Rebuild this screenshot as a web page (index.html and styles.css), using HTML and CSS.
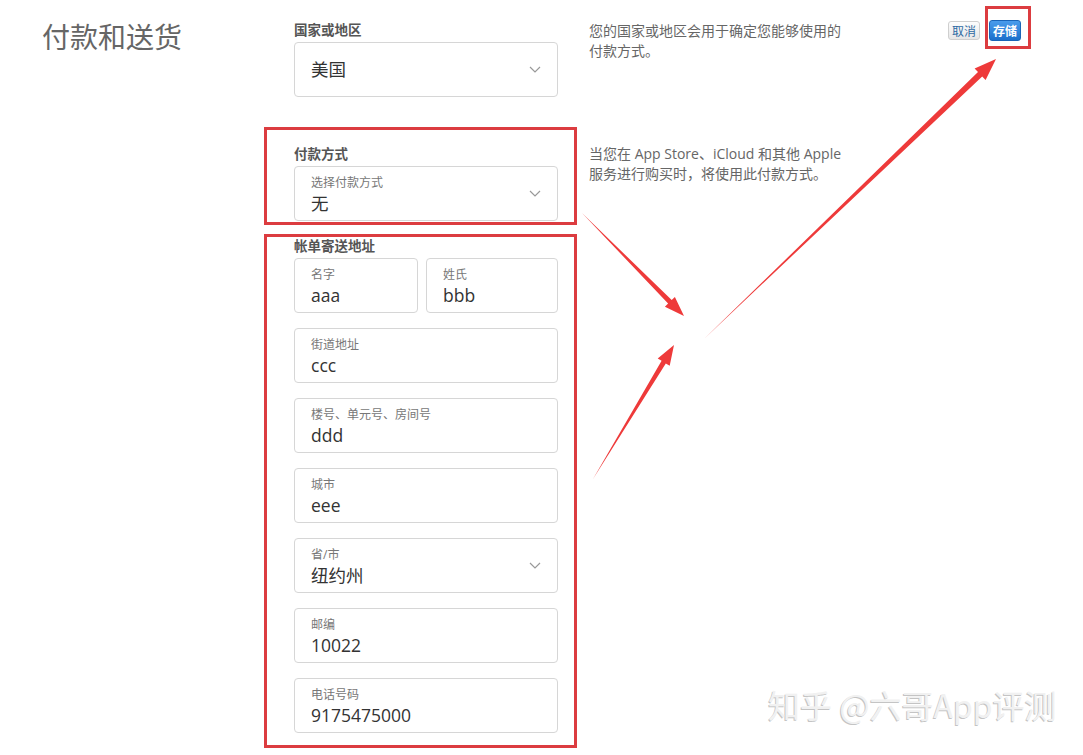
FILE: index.html
```html
<!DOCTYPE html>
<html lang="zh-CN">
<head>
    <meta charset="UTF-8">
    <meta name="viewport" content="width=device-width, initial-scale=1.0">
    <title>付款和送货</title>
    <link rel="stylesheet" href="styles.css">
</head>
<body>
    <main class="page">
        <h1 class="title">付款和送货</h1>

        <section class="country">
            <div class="group-label">国家或地区</div>
            <div class="field select single">
                <span class="value">美国</span>
                <svg class="chevron" width="12" height="7" viewBox="0 0 12 7"><polyline points="1,1 6,6 11,1" /></svg>
            </div>
        </section>

        <p class="help help-country">您的国家或地区会用于确定您能够使用的<br>付款方式。</p>

        <div class="actions">
            <button class="btn btn-cancel">取消</button>
            <button class="btn btn-save">存储</button>
        </div>

        <section class="payment marked">
            <div class="group-label">付款方式</div>
            <div class="field select">
                <div>
                    <div class="field-label">选择付款方式</div>
                    <div class="value">无</div>
                </div>
                <svg class="chevron" width="12" height="7" viewBox="0 0 12 7"><polyline points="1,1 6,6 11,1" /></svg>
            </div>
        </section>

        <p class="help help-payment">当您在 App Store、iCloud 和其他 Apple<br>服务进行购买时，将使用此付款方式。</p>

        <section class="billing marked">
            <div class="group-label">帐单寄送地址</div>
            <div class="fields">
                <div class="name-row">
                    <div class="field">
                        <div class="field-label">名字</div>
                        <div class="value">aaa</div>
                    </div>
                    <div class="field">
                        <div class="field-label">姓氏</div>
                        <div class="value">bbb</div>
                    </div>
                </div>
                <div class="field">
                    <div class="field-label">街道地址</div>
                    <div class="value">ccc</div>
                </div>
                <div class="field">
                    <div class="field-label">楼号、单元号、房间号</div>
                    <div class="value">ddd</div>
                </div>
                <div class="field">
                    <div class="field-label">城市</div>
                    <div class="value">eee</div>
                </div>
                <div class="field select">
                    <div>
                        <div class="field-label">省/市</div>
                        <div class="value">纽约州</div>
                    </div>
                    <svg class="chevron" width="12" height="7" viewBox="0 0 12 7"><polyline points="1,1 6,6 11,1" /></svg>
                </div>
                <div class="field">
                    <div class="field-label">邮编</div>
                    <div class="value">10022</div>
                </div>
                <div class="field">
                    <div class="field-label">电话号码</div>
                    <div class="value">9175475000</div>
                </div>
            </div>
        </section>
    </main>

    <!-- annotations drawn over the screenshot -->
    <svg class="annotations" width="1083" height="755" viewBox="0 0 1083 755">
        <rect x="986.5" y="7.5" width="43" height="40" />
        <polygon points="582,213 668.1,303.6 664.9,306.7 684,316 674.9,296.9 671.7,300.0" />
        <polygon points="593,479 665.8,363.4 669.7,365.7 674,345 657.7,358.5 661.6,360.8" />
        <polygon points="704,339 982.2,76.4 985.6,80.0 996,59 974.6,68.4 978.0,72.0" />
    </svg>

    <div class="watermark">知乎 @六哥App评测</div>
</body>
</html>
```

FILE: styles.css
```css
body {
    margin: 0;
    font-family: "Open Sans", "Noto Sans CJK SC", sans-serif;
    color: #333;
    background: #fff;
}
.page {
    display: grid;
    grid-template-columns: 252px 264px 1fr auto;
    align-items: start;
    padding: 21px 62px 0 42px;
}
.title {
    grid-column: 1;
    grid-row: 1;
    margin: 2px 0 0 0;
    font-size: 28px;
    line-height: 28px;
    font-weight: normal;
    color: #666;
}
.country {
    grid-column: 2;
    grid-row: 1;
}
.payment {
    grid-column: 2;
    grid-row: 2;
    margin-top: 30px;
    padding: 15px 16px 1px 27px;
}
.billing {
    grid-column: 2;
    grid-row: 3;
    margin-top: 9px;
    padding: 0 16px 12px 27px;
}
.marked {
    margin-left: -30px;
    margin-right: -19px;
    border: 3px solid #dc3c40;
}
.group-label {
    font-size: 13.5px;
    line-height: 18px;
    font-weight: bold;
    color: #555;
    margin-bottom: 3px;
}
.field {
    box-sizing: border-box;
    height: 55px;
    border: 1px solid #d6d6d6;
    border-radius: 4px;
    padding: 8px 16px 0 16px;
    background: #fff;
}
.field-label {
    font-size: 12px;
    line-height: 16px;
    color: #777;
}
.value {
    font-size: 17.5px;
    line-height: 25px;
    color: #333;
}
.select {
    display: flex;
    justify-content: space-between;
    align-items: center;
    padding-top: 0;
}
.select > div {
    padding-top: 8px;
    align-self: flex-start;
}
.chevron {
    fill: none;
    stroke: #999;
    stroke-width: 1.2;
}
.fields {
    display: flex;
    flex-direction: column;
    gap: 15px;
}
.name-row {
    display: grid;
    grid-template-columns: 124px 1fr;
    gap: 8px;
}
.help {
    grid-column: 3;
    margin: 0;
    padding-left: 31px;
    font-size: 14px;
    line-height: 20px;
    color: #666;
}
.help-country {
    grid-row: 1;
}
.help-payment {
    grid-row: 2;
    padding-top: 47px;
}
.actions {
    grid-column: 4;
    grid-row: 1;
    display: flex;
    align-items: center;
    gap: 9px;
    margin-top: -1px;
}
.btn {
    font-family: "Noto Sans CJK SC", sans-serif;
    font-size: 12px;
    line-height: 17px;
    padding: 0 3px;
    border-radius: 3px;
    cursor: pointer;
}
.btn-cancel {
    height: 19px;
    color: #2d6aa3;
    background: linear-gradient(#fdfdfd, #e6e6e6);
    border: 1px solid #cfcfcf;
}
.btn-save {
    height: 21px;
    color: #fff;
    font-weight: bold;
    background: linear-gradient(#4a9cec, #1b6fcb);
    border: 1px solid #1a65b8;
}
.annotations {
    position: absolute;
    left: 0;
    top: 0;
    pointer-events: none;
}
.annotations rect {
    fill: none;
    stroke: #dc3c40;
    stroke-width: 3;
}
.annotations polygon {
    fill: #ee3a3a;
}
.watermark {
    position: absolute;
    left: 768px;
    top: 682px;
    font-family: "Noto Sans CJK SC", sans-serif;
    font-size: 32px;
    line-height: 44px;
    color: #f1f1f1;
    text-shadow: -1px 1px 0 #c4c4c4;
    white-space: nowrap;
}
```
